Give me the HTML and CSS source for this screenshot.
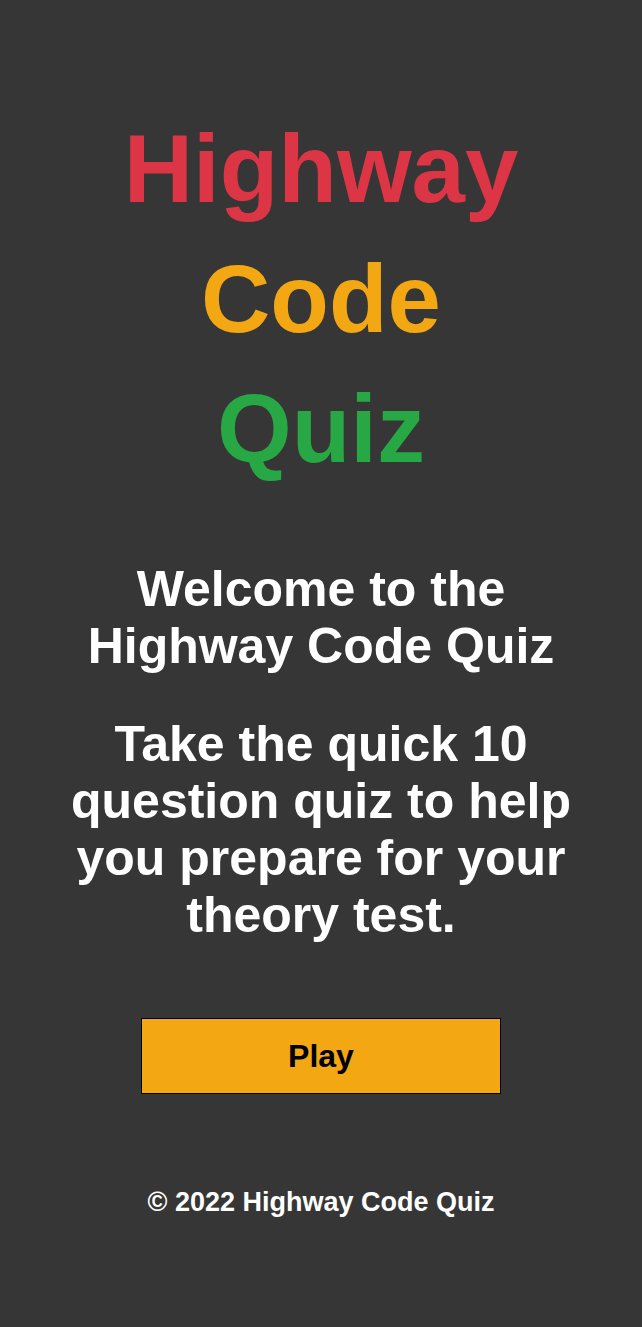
FILE: index.html
```html
<!DOCTYPE html>
<html lang="en">
<head>
<meta charset="utf-8">
<title>Highway Code Quiz</title>
<link rel="stylesheet" href="styles.css">
</head>
<body>
<main class="page">
  <h1 class="title">
    <span class="title-word red">Highway</span>
    <span class="title-word orange">Code</span>
    <span class="title-word green">Quiz</span>
  </h1>
  <h2 class="intro">Welcome to the Highway Code Quiz</h2>
  <p class="intro lead">Take the quick 10 question quiz to help you prepare for your theory test.</p>
  <button class="play-btn" type="button">Play</button>
  <footer class="footer">© 2022 Highway Code Quiz</footer>
</main>
</body>
</html>
```
FILE: styles.css
```css
html, body {
  margin: 0;
  padding: 0;
  background: #363636;
}
body {
  font-family: "Liberation Sans", Arial, Helvetica, sans-serif;
  color: #ffffff;
}
.page {
  display: flex;
  flex-direction: column;
  align-items: center;
  text-align: center;
  padding: 104px 40px 0;
  min-height: 1327px;
  box-sizing: border-box;
}
.title {
  margin: 0;
  font-size: 96px;
  line-height: 130px;
  font-weight: 700;
}
.title-word {
  display: block;
}
.red { color: #dc3545; }
.orange { color: #f3a712; }
.green { color: #28a745; }
.intro {
  margin: 67px 0 0;
  font-size: 50px;
  line-height: 57px;
  font-weight: 700;
  max-width: 560px;
}
.lead {
  margin-top: 41px;
}
.play-btn {
  margin-top: 74px;
  width: 360px;
  height: 76px;
  background: #f3a712;
  border: 1px solid #000;
  color: #000;
  font-family: inherit;
  font-size: 32px;
  font-weight: 700;
  padding: 0;
}
.footer {
  margin-top: 93px;
  font-size: 27px;
  font-weight: 700;
  line-height: 31px;
}
```
